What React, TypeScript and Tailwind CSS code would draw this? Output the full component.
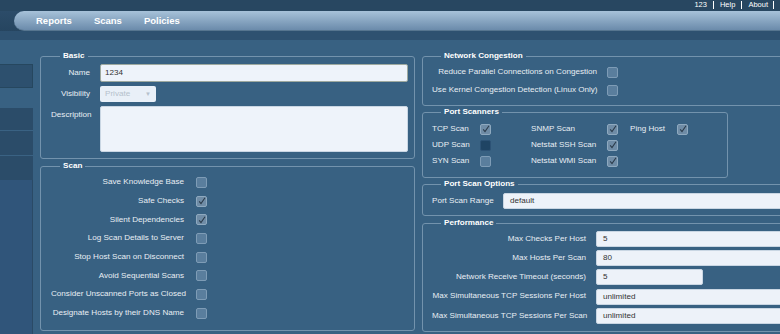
import React from 'react';

const font = { fontFamily: '"Liberation Sans", Arial, sans-serif' };

const Check: React.FC<{ checked?: boolean; dark?: boolean }> = ({ checked, dark }) => (
  <span
    className={
      'inline-flex w-[11px] h-[11px] rounded-[2px] border items-center justify-center shrink-0 ' +
      (dark
        ? 'bg-[#1f4464] border-[#2c5275]'
        : checked
        ? 'bg-[#6f8ca6] border-[#8ea9bf]'
        : 'bg-[#5a7e9d] border-[#7e9cb6]')
    }
  >
    {checked && (
      <svg width="8" height="8" viewBox="0 0 8 8">
        <path d="M1.2 4.4 L3 6.6 L7 0.8" fill="none" stroke="#2b3b4a" strokeWidth="1.1" />
      </svg>
    )}
  </span>
);

const Box: React.FC<{ title: string; className?: string; children: React.ReactNode }> = ({ title, className, children }) => (
  <fieldset className={'border border-[#7393ad] rounded-[3px] ' + (className || '')}>
    <legend className="ml-[9px] px-[3px] text-[8.1px] leading-[10px] font-bold text-white">{title}</legend>
    {children}
  </fieldset>
);

const Field: React.FC<{ value: string; className?: string }> = ({ value, className }) => (
  <div className={'h-[16px] bg-[#edf2f9] rounded-[2px] border border-[#c9d6e3] text-[#333] leading-[14px] pl-[6px] ' + (className || '')}>
    {value}
  </div>
);

const scanRows: [string, boolean][] = [
  ['Save Knowledge Base', false],
  ['Safe Checks', true],
  ['Silent Dependencies', true],
  ['Log Scan Details to Server', false],
  ['Stop Host Scan on Disconnect', false],
  ['Avoid Sequential Scans', false],
  ['Consider Unscanned Ports as Closed', false],
  ['Designate Hosts by their DNS Name', false],
];

const perfRows: [string, string, boolean][] = [
  ['Max Checks Per Host', '5', false],
  ['Max Hosts Per Scan', '80', false],
  ['Network Receive Timeout (seconds)', '5', true],
  ['Max Simultaneous TCP Sessions Per Host', 'unlimited', false],
  ['Max Simultaneous TCP Sessions Per Scan', 'unlimited', false],
];

export default function App() {
  return (
    <div style={font} className="w-[780px] h-[334px] overflow-hidden bg-[#386182] text-[#e8eef4] text-[8.1px] whitespace-nowrap relative">
      {/* top strip */}
      <div className="h-[11px] bg-[#284761] flex justify-end items-start pr-[6px]">
        <div className="flex items-center text-[7.5px] text-white leading-[9px]">
          <span>123</span>
          <span className="w-px h-[8px] bg-white mx-[6px]" />
          <span>Help</span>
          <span className="w-px h-[8px] bg-white mx-[6px]" />
          <span>About</span>
          <span className="w-px h-[8px] bg-white ml-[5px]" />
        </div>
      </div>
      <div className="h-[20px] bg-gradient-to-b from-[#2c4c69] to-[#264560] flex">
        <div className="w-[14px]" />
        <div className="flex-1 rounded-l-[10px] bg-gradient-to-b from-[#a7c2d9] to-[#6b8bab] border-b border-[#56758f] flex items-center gap-[22px] pl-[22px] pt-px text-[9.5px] font-bold text-white">
          <span>Reports</span>
          <span>Scans</span>
          <span>Policies</span>
        </div>
      </div>
      <div className="h-[9px] bg-[#2e5170]" />

      <div className="flex h-[294px]">
        {/* sidebar */}
        <div className="w-[33px] shrink-0 flex flex-col">
          <div className="h-[24px] mt-[24px] bg-[#2d506e] border-y border-r border-[#26475f]" />
          <div className="h-[20px]" />
          <div className="h-[23px] bg-[#2b4c69] border-b border-[#3a6283]" />
          <div className="h-[25px] bg-[#2b4c69] border-b border-[#3a6283]" />
          <div className="h-[24px] bg-[#2b4c69]" />
          <div className="flex-1 bg-[#30557a] border-r border-[#2a4a66]" />
        </div>

        {/* left column */}
        <div className="w-[375px] shrink-0 ml-[7px] pt-[11px] flex flex-col">
          <Box title="Basic" className="pl-[10px] pr-[6px] pt-[3px] pb-[6px]">
            <div className="grid grid-cols-[39px_1fr] gap-x-[10px] gap-y-[4px] items-center">
              <span className="text-right">Name</span>
              <div className="h-[18px] bg-[#eef3fa] rounded-[2px] border-[1.5px] border-[#9ea99f] text-[#333] leading-[15px] pl-[4px]">1234</div>
              <span className="text-right">Visibility</span>
              <div className="w-[56px] h-[16px] bg-[#e9f0f8] rounded-[2px] flex items-center justify-between px-[5px] text-[#b5c1cc]">
                <span>Private</span>
                <span className="text-[6px]">▼</span>
              </div>
              <span className="text-right self-start pt-[3px]">Description</span>
              <div className="h-[46px] bg-[#eef3fa] rounded-[2px] border border-[#c9d6e3]" />
            </div>
          </Box>
          <Box title="Scan" className="mt-[2px] pl-[10px] pt-[2px] pb-[7px]">
            {scanRows.map(([l, c]) => (
              <div key={l} className="flex items-center h-[18.7px]">
                <span className="w-[133px] text-right">{l}</span>
                <span className="ml-[12px] flex">
                  <Check checked={c} />
                </span>
              </div>
            ))}
          </Box>
        </div>

        {/* right column */}
        <div className="w-[420px] shrink-0 ml-[7px] pt-[11px] flex flex-col">
          <Box title="Network Congestion" className="pl-[9px] pt-[2px] pb-[6px]">
            {[
              'Reduce Parallel Connections on Congestion',
              'Use Kernel Congestion Detection (Linux Only)',
            ].map((l) => (
              <div key={l} className="flex items-center h-[18px]">
                <span className="w-[165px] text-right">{l}</span>
                <span className="ml-[10px] flex">
                  <Check />
                </span>
              </div>
            ))}
          </Box>
          <Box title="Port Scanners" className="w-[306px] mt-[1px] pl-[9px] pt-[4px] pb-[8px]">
            <div className="grid grid-cols-[48px_51px_76px_23px_47px_11px] auto-rows-[16px] items-center">
              <span>TCP Scan</span>
              <Check checked />
              <span>SNMP Scan</span>
              <Check checked />
              <span>Ping Host</span>
              <Check checked />
              <span>UDP Scan</span>
              <Check dark />
              <span>Netstat SSH Scan</span>
              <Check checked />
              <span />
              <span />
              <span>SYN Scan</span>
              <Check />
              <span>Netstat WMI Scan</span>
              <Check checked />
            </div>
          </Box>
          <Box title="Port Scan Options" className="mt-[1px] pl-[9px] pt-[4px] pb-[6px]">
            <div className="flex items-center">
              <span className="w-[71px]">Port Scan Range</span>
              <Field value="default" className="flex-1" />
            </div>
          </Box>
          <Box title="Performance" className="mt-[2px] pl-[9px] pt-[1px] pb-[6px]">
            {perfRows.map(([l, v, short]) => (
              <div key={l} className="flex items-center h-[19.3px]">
                <span className="w-[154px] text-right">{l}</span>
                <Field value={v} className={'ml-[10px] ' + (short ? 'w-[107px]' : 'flex-1')} />
              </div>
            ))}
          </Box>
        </div>
      </div>
    </div>
  );
}
